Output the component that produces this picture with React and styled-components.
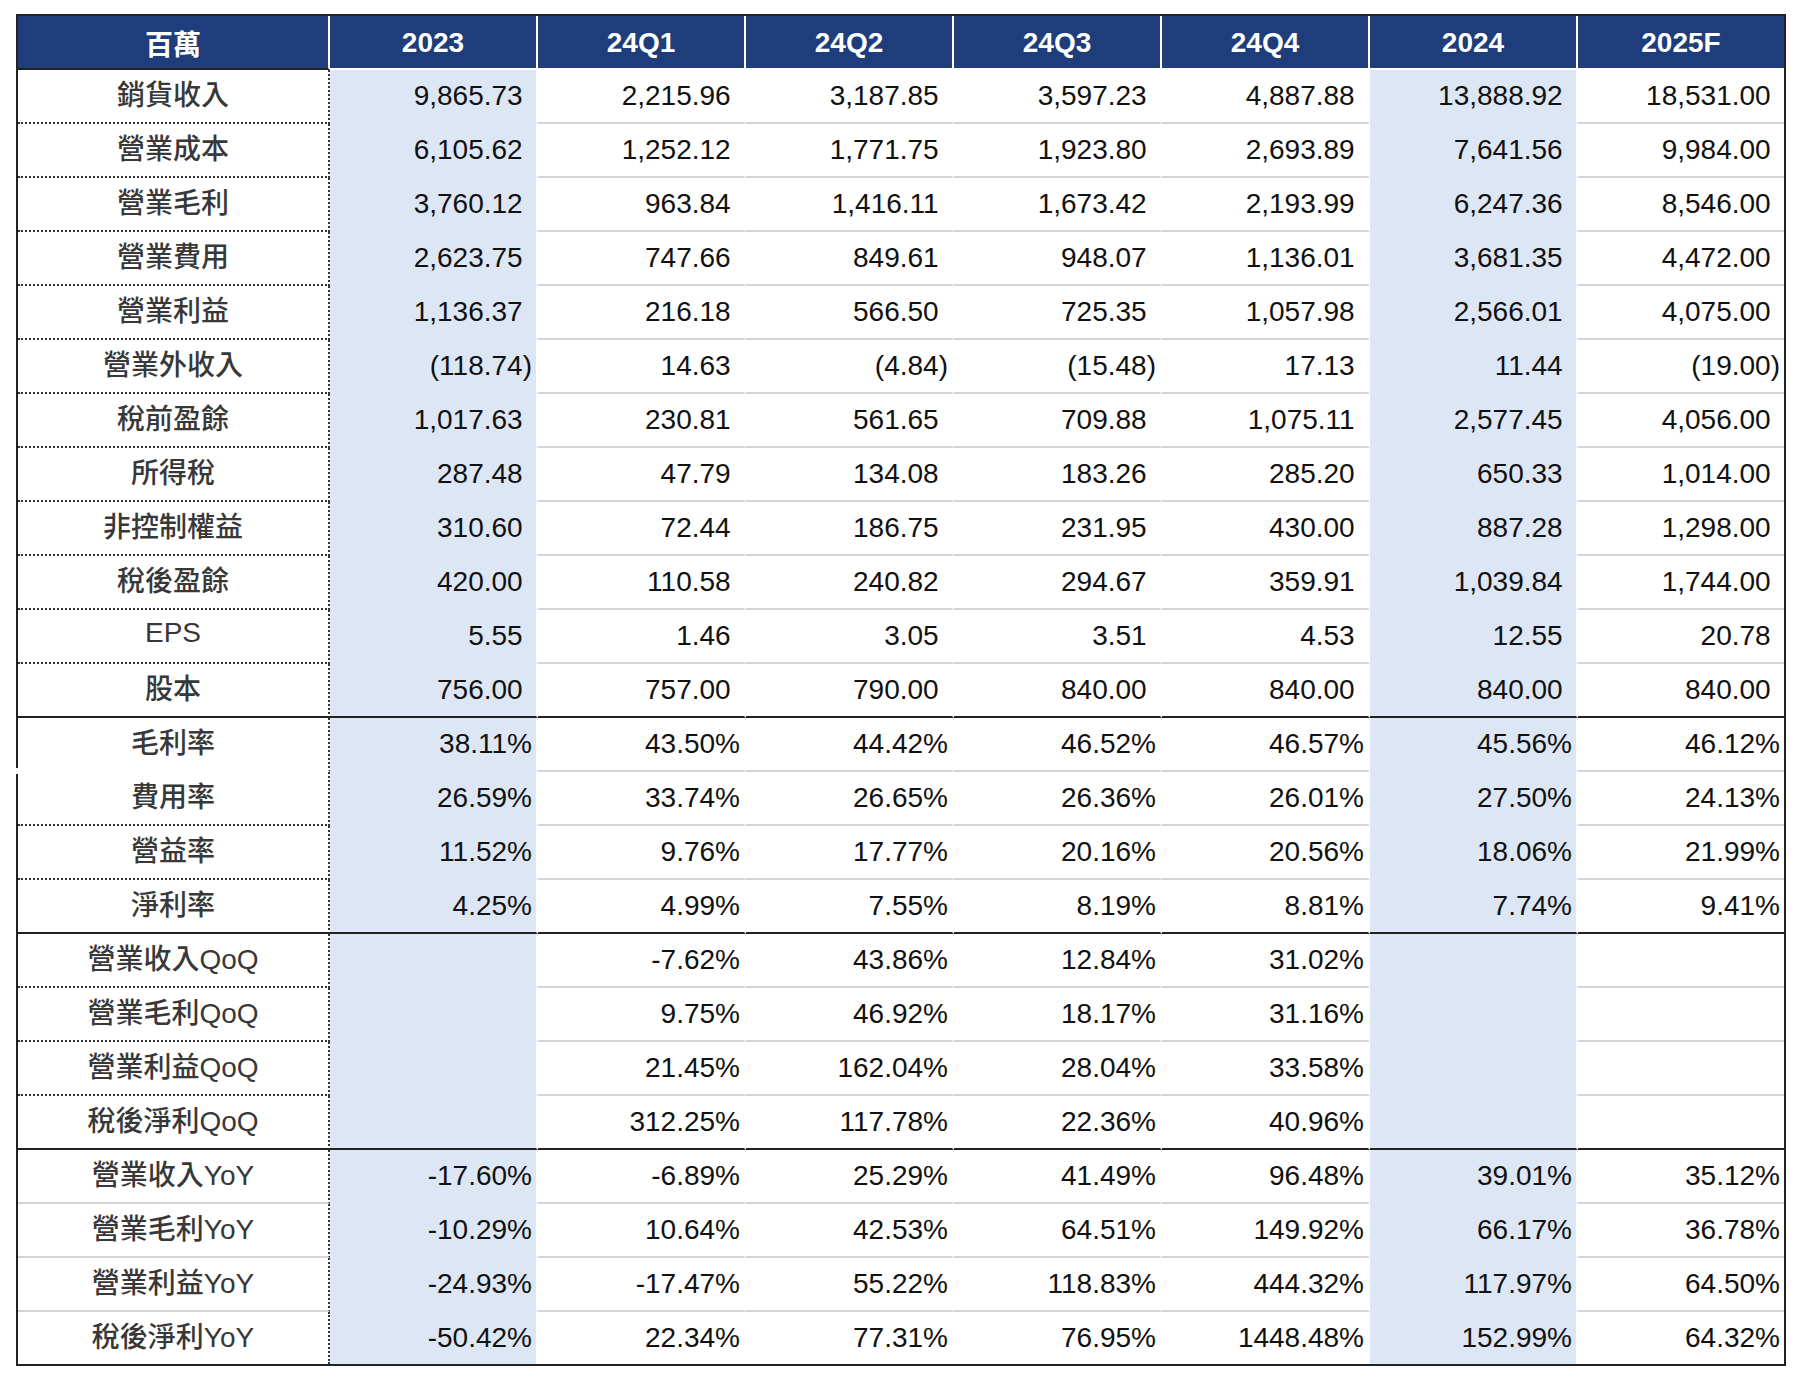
import React from 'react';
import styled, { createGlobalStyle, css } from 'styled-components';

const NAVY = '#1e3d7a';
const HL = '#dce6f4';
const DARK = '#222';
const GRAY = '#d4d4d4';

const GlobalStyle = createGlobalStyle`
  html, body {
    margin: 0;
    padding: 0;
    background: #fff;
  }
  body {
    font-family: "Liberation Sans", "Noto Sans CJK TC", sans-serif;
  }
`;

const Page = styled.div`
  padding: 14px 0 0 16px;
`;

const Sheet = styled.div`
  display: grid;
  grid-template-columns: 312px repeat(6, 208px) 206px;
  width: max-content;
  border: 2px solid ${DARK};
`;

const HeadCell = styled.div`
  box-sizing: border-box;
  height: 54px;
  display: flex;
  align-items: center;
  justify-content: center;
  padding-top: 2px;
  background: ${NAVY};
  color: #fff;
  font-family: "Liberation Sans", "Noto Sans CJK TC", sans-serif;
  font-weight: 700;
  font-size: 28px;
  border-right: ${p => (p.$lastCol ? 'none' : '2px solid #fff')};
  border-bottom: 2px solid ${p => (p.$label ? DARK : '#fff')};
`;

const edgeStyles = {
  dotted: css`border-bottom: 2px dotted #333;`,
  gap: css`border-bottom: 2px solid #fff;`,
  gray: css`border-bottom: 2px solid ${GRAY};`,
  section: css`border-bottom: 2px solid ${DARK};`,
  none: css`border-bottom: none;`,
};

const LabelCell = styled.div`
  position: relative;
  box-sizing: border-box;
  height: ${p => (p.$edge === 'none' ? 52 : 54)}px;
  display: flex;
  align-items: center;
  justify-content: center;
  padding-bottom: 6px;
  color: #383838;
  font-family: "Liberation Sans", "Noto Sans CJK TC", sans-serif;
  font-weight: 500;
  font-size: 28px;
  border-right: 2px dotted #333;
  ${p => edgeStyles[p.$edge]}

  ${p => p.$edge === 'gap' && css`
    &::after {
      content: '';
      position: absolute;
      left: -2px;
      bottom: -4px;
      width: 2px;
      height: 6px;
      background: #fff;
    }
  `}
`;

const ValueCell = styled.div`
  box-sizing: border-box;
  height: ${p => (p.$edge === 'none' ? 52 : 54)}px;
  display: flex;
  align-items: center;
  justify-content: flex-end;
  padding-right: 4px;
  background: ${p => (p.$hl ? HL : '#fff')};
  color: #111;
  font-family: "Liberation Sans", Arial, sans-serif;
  font-size: 28px;
  border-right: ${p => (p.$lastCol ? 'none' : '2px solid #fff')};
  border-bottom: ${p => {
    if (p.$edge === 'none') return 'none';
    if (p.$edge === 'section') return `2px solid ${DARK}`;
    return `2px solid ${p.$hl ? HL : GRAY}`;
  }};
`;

const Paren = styled.span`
  visibility: hidden;
`;

const headers = ['百萬', '2023', '24Q1', '24Q2', '24Q3', '24Q4', '2024', '2025F'];
const highlighted = [true, false, false, false, false, true, false];

const sections = [
  {
    kind: 'money',
    labelEdge: 'dotted',
    rows: [
      ['銷貨收入', '9,865.73', '2,215.96', '3,187.85', '3,597.23', '4,887.88', '13,888.92', '18,531.00'],
      ['營業成本', '6,105.62', '1,252.12', '1,771.75', '1,923.80', '2,693.89', '7,641.56', '9,984.00'],
      ['營業毛利', '3,760.12', '963.84', '1,416.11', '1,673.42', '2,193.99', '6,247.36', '8,546.00'],
      ['營業費用', '2,623.75', '747.66', '849.61', '948.07', '1,136.01', '3,681.35', '4,472.00'],
      ['營業利益', '1,136.37', '216.18', '566.50', '725.35', '1,057.98', '2,566.01', '4,075.00'],
      ['營業外收入', '(118.74)', '14.63', '(4.84)', '(15.48)', '17.13', '11.44', '(19.00)'],
      ['稅前盈餘', '1,017.63', '230.81', '561.65', '709.88', '1,075.11', '2,577.45', '4,056.00'],
      ['所得稅', '287.48', '47.79', '134.08', '183.26', '285.20', '650.33', '1,014.00'],
      ['非控制權益', '310.60', '72.44', '186.75', '231.95', '430.00', '887.28', '1,298.00'],
      ['稅後盈餘', '420.00', '110.58', '240.82', '294.67', '359.91', '1,039.84', '1,744.00'],
      ['EPS', '5.55', '1.46', '3.05', '3.51', '4.53', '12.55', '20.78'],
      ['股本', '756.00', '757.00', '790.00', '840.00', '840.00', '840.00', '840.00'],
    ],
  },
  {
    kind: 'pct',
    labelEdge: 'dotted',
    firstEdge: 'gap',
    rows: [
      ['毛利率', '38.11%', '43.50%', '44.42%', '46.52%', '46.57%', '45.56%', '46.12%'],
      ['費用率', '26.59%', '33.74%', '26.65%', '26.36%', '26.01%', '27.50%', '24.13%'],
      ['營益率', '11.52%', '9.76%', '17.77%', '20.16%', '20.56%', '18.06%', '21.99%'],
      ['淨利率', '4.25%', '4.99%', '7.55%', '8.19%', '8.81%', '7.74%', '9.41%'],
    ],
  },
  {
    kind: 'pct',
    labelEdge: 'dotted',
    rows: [
      ['營業收入QoQ', '', '-7.62%', '43.86%', '12.84%', '31.02%', '', ''],
      ['營業毛利QoQ', '', '9.75%', '46.92%', '18.17%', '31.16%', '', ''],
      ['營業利益QoQ', '', '21.45%', '162.04%', '28.04%', '33.58%', '', ''],
      ['稅後淨利QoQ', '', '312.25%', '117.78%', '22.36%', '40.96%', '', ''],
    ],
  },
  {
    kind: 'pct',
    labelEdge: 'gray',
    rows: [
      ['營業收入YoY', '-17.60%', '-6.89%', '25.29%', '41.49%', '96.48%', '39.01%', '35.12%'],
      ['營業毛利YoY', '-10.29%', '10.64%', '42.53%', '64.51%', '149.92%', '66.17%', '36.78%'],
      ['營業利益YoY', '-24.93%', '-17.47%', '55.22%', '118.83%', '444.32%', '117.97%', '64.50%'],
      ['稅後淨利YoY', '-50.42%', '22.34%', '77.31%', '76.95%', '1448.48%', '152.99%', '64.32%'],
    ],
  },
];

function renderValue(kind, v) {
  if (kind === 'money' && v && !v.startsWith('(')) {
    return (
      <>
        {v}
        <Paren>)</Paren>
      </>
    );
  }
  return v;
}

export default function App() {
  const cells = [];

  headers.forEach((h, i) => {
    cells.push(
      <HeadCell key={`h-${i}`} $label={i === 0} $lastCol={i === headers.length - 1}>
        {h}
      </HeadCell>
    );
  });

  sections.forEach((sec, si) => {
    const lastSection = si === sections.length - 1;
    sec.rows.forEach((row, ri) => {
      const lastRow = ri === sec.rows.length - 1;
      let edge = 'row';
      if (lastRow) edge = lastSection ? 'none' : 'section';

      let labelEdge = sec.labelEdge;
      if (edge !== 'row') labelEdge = edge;
      else if (ri === 0 && sec.firstEdge) labelEdge = sec.firstEdge;

      const [label, ...values] = row;
      cells.push(
        <LabelCell key={`l-${si}-${ri}`} $edge={labelEdge}>
          {label}
        </LabelCell>
      );
      values.forEach((v, ci) => {
        cells.push(
          <ValueCell
            key={`v-${si}-${ri}-${ci}`}
            $hl={highlighted[ci]}
            $edge={edge}
            $lastCol={ci === values.length - 1}
          >
            {renderValue(sec.kind, v)}
          </ValueCell>
        );
      });
    });
  });

  return (
    <>
      <GlobalStyle />
      <Page>
        <Sheet>{cells}</Sheet>
      </Page>
    </>
  );
}
